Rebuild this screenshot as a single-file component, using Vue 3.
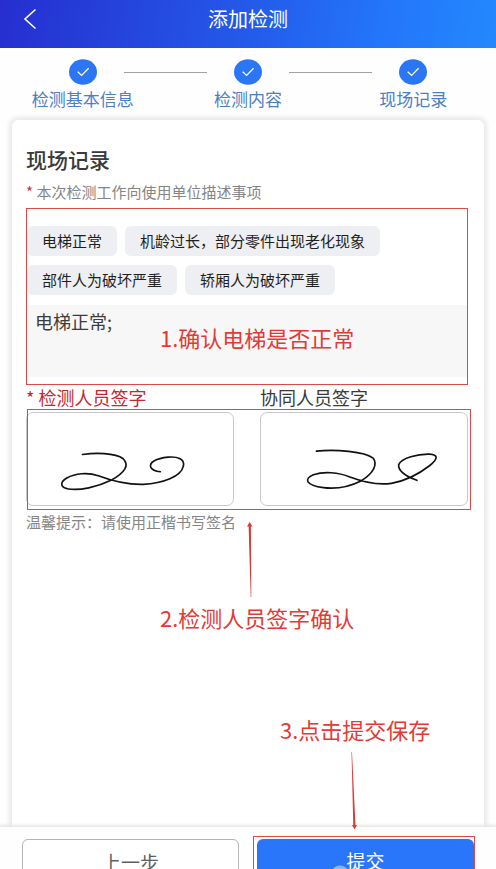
<script setup>
import { ref } from 'vue'

const steps = ['检测基本信息', '检测内容', '现场记录']
const tags = ['电梯正常', '机龄过长，部分零件出现老化现象', '部件人为破坏严重', '轿厢人为破坏严重']
const note = ref('电梯正常;')

function addTag(tag) {
  note.value += tag + ';'
}
</script>

<template>
  <div class="page">
    <header class="bar">
      <button class="back" type="button" aria-label="返回">
        <svg viewBox="0 0 14 22" width="14" height="22"><path d="M12.500 1.500 L2 11 L12.500 20.500" /></svg>
      </button>
      <h1>添加检测</h1>
    </header>

    <ol class="steps">
      <li v-for="step in steps" :key="step">
        <div class="marker">
          <span class="line"></span>
          <svg class="dot" viewBox="0 0 28 26" width="28" height="26">
            <ellipse cx="14" cy="13" rx="14" ry="12.700" />
            <path d="M8.700 12.800 L12.600 16.400 L19.600 9.200" />
          </svg>
          <span class="line"></span>
        </div>
        <span class="label">{{ step }}</span>
      </li>
    </ol>

    <main class="card">
      <h2>现场记录</h2>
      <label class="desc" for="note"><span class="star">*</span> 本次检测工作向使用单位描述事项</label>

      <section class="record">
        <div class="tags">
          <button v-for="tag in tags" :key="tag" type="button" @click="addTag(tag)">{{ tag }}</button>
        </div>
        <textarea id="note" v-model="note"></textarea>
        <p class="callout first">1.确认电梯是否正常</p>
      </section>

      <div class="sign-labels">
        <span class="required">* 检测人员签字</span>
        <span>协同人员签字</span>
      </div>
      <section class="signs">
        <div class="pad">
          <svg viewBox="80 84 621 278" role="img" aria-label="检测人员签字">
            <path d="M247 209 C285 204 345 203 370 222 C390 242 374 264 335 286 C290 308 240 318 205 313 C180 309 178 293 200 280 C225 266 262 262 295 273 C340 290 385 300 430 299 C490 296 545 275 551 245 C558 220 530 215 505 217 C470 221 448 232 453 247 C458 258 470 260 482 261" />
          </svg>
        </div>
        <div class="pad">
          <svg viewBox="37 84 621 278" role="img" aria-label="协同人员签字">
            <path d="M204 199 C260 193 350 200 375 220 C390 240 375 265 340 288 C300 308 265 314 225 309 C172 303 165 282 195 270 C225 260 270 262 305 277 C345 292 385 303 430 296 C465 290 510 270 545 243 C575 218 568 210 545 208 C510 207 460 220 452 240 C450 258 475 275 507 287" />
          </svg>
        </div>
      </section>
      <p class="hint">温馨提示：请使用正楷书写签名</p>
    </main>

    <footer class="actions">
      <button class="prev" type="button">上一步</button>
      <div class="submit-wrap">
        <button class="submit" type="button">提交</button>
        <svg class="mark" viewBox="0 0 18 16" width="18" height="16"><ellipse cx="9" cy="8" rx="8.500" ry="7.500" /></svg>
      </div>
    </footer>

    <svg class="arrow up" viewBox="0 0 8 76" width="8" height="76"><path d="M2.600 3 L4.900 3 L5.300 75 L4.700 75 Z M3.700 0 L6.500 4.500 L1 4.500 Z" /></svg>
    <p class="callout second">2.检测人员签字确认</p>
    <p class="callout third">3.点击提交保存</p>
    <svg class="arrow down" viewBox="0 0 8 78" width="8" height="78"><path d="M1.500 0 L2 0 L5.500 74 L3.300 74 Z M2 73 L7 73 L4.600 77.500 Z" /></svg>
  </div>
</template>

<style>
body {
  margin: 0;
  background: #fff;
}
</style>

<style scoped>
.page {
  position: relative;
  display: flex;
  flex-direction: column;
  height: 100vh;
  overflow: hidden;
  background: #fefefe;
  color: #3a3a3a;
  font-family: "Noto Sans CJK SC", sans-serif;
}

h1, h2, p, ol {
  margin: 0;
  padding: 0;
  font-weight: 400;
}

button, textarea {
  font-family: inherit;
  margin: 0;
  box-sizing: border-box;
}

.bar {
  display: grid;
  grid-template-columns: 60px 1fr 60px;
  align-items: center;
  height: 48px;
  padding-bottom: 10px;
  box-sizing: border-box;
  flex: none;
  color: #fff;
  background: linear-gradient(100deg, #262ecf 0%, #2458e8 48%, #2377fa 78%, #2388fe 100%);
}

.bar h1 {
  font-size: 20px;
  line-height: 28px;
  text-align: center;
}

.back {
  display: flex;
  padding: 0 0 0 23px;
  border: 0;
  background: none;
}

.back svg {
  fill: none;
  stroke: #fff;
  stroke-width: 1.6;
}

.steps {
  display: grid;
  grid-template-columns: repeat(3, 1fr);
  flex: none;
  padding: 11px 0 10px;
  list-style: none;
}

.steps li {
  text-align: center;
}

.marker {
  display: flex;
  align-items: center;
  gap: 27px;
}

.line {
  flex: 1;
  height: 1px;
  background: #a2a2a2;
}

.steps li:first-child .line:first-child,
.steps li:last-child .line:last-child {
  visibility: hidden;
}

.dot {
  fill: #2a76f5;
}

.dot path {
  fill: none;
  stroke: #fff;
  stroke-width: 1.3;
}

.label {
  display: block;
  margin-top: 2px;
  font-size: 17px;
  line-height: 23px;
  color: #4a80c6;
  white-space: nowrap;
}

.card {
  flex: 1;
  margin: 0 12px;
  padding: 25px 16px 0 14px;
  border-radius: 6px 6px 0 0;
  background: #fff;
  box-shadow: 0 0 4px 3px #e9e9e9;
}

.card h2 {
  font-size: 21px;
  line-height: 28px;
  font-weight: 500;
}

.desc {
  display: block;
  margin-top: 7px;
  font-size: 15px;
  line-height: 24px;
  color: #858585;
}

.star {
  color: #c8353a;
}

.record {
  position: relative;
  margin-top: 4px;
  padding: 17px 0 7px;
  border: 1px solid #dc4a48;
}

.tags {
  display: flex;
  flex-wrap: wrap;
  gap: 9px 8px;
}

.tags button {
  height: 30px;
  padding: 0 15px;
  border: 0;
  border-radius: 6px;
  background: #eeeff3;
  color: #1f1f22;
  font-size: 15px;
  line-height: 28px;
}

textarea {
  display: block;
  width: 100%;
  height: 72px;
  margin-top: 10px;
  padding: 3px 8px;
  border: 0;
  resize: none;
  background: #f7f7f7;
  color: #3c3c3c;
  font-size: 18px;
  line-height: 26px;
}

.callout {
  position: absolute;
  font-size: 22px;
  line-height: 30px;
  color: #e23a36;
  white-space: nowrap;
}

.first {
  left: 133px;
  top: 113px;
}

.second {
  left: 160px;
  top: 602px;
}

.third {
  left: 280px;
  top: 714px;
}

.sign-labels {
  display: grid;
  grid-template-columns: 1fr 1fr;
  column-gap: 26px;
  font-size: 18px;
  line-height: 24px;
}

.required {
  color: #c22a30;
}

.signs {
  position: relative;
  display: grid;
  grid-template-columns: 1fr 1fr;
  column-gap: 26px;
  padding: 3px 0 4px;
}

.signs::after {
  content: "";
  position: absolute;
  inset: 0 -3px 0 1px;
  border: 1px solid #dc4a48;
  pointer-events: none;
}

.pad {
  border: 1px solid #c9c9cb;
  border-radius: 7px;
}

.pad svg {
  display: block;
  width: 100%;
  fill: none;
  stroke: #111;
  stroke-width: 5;
  stroke-linecap: round;
}

.hint {
  font-size: 15px;
  line-height: 24px;
  color: #858585;
}

.actions {
  position: relative;
  display: grid;
  grid-template-columns: 1fr 1fr;
  column-gap: 18px;
  flex: none;
  height: 42px;
  padding: 12px 22px 0;
  box-sizing: border-box;
  background: #fefefe;
  box-shadow: 0 -1px 3px 1px #e6e6e6;
}

.actions button {
  width: 100%;
  height: 46px;
  border-radius: 6px;
  font-size: 19px;
  line-height: 28px;
}

.prev {
  border: 1px solid #b4b4b4;
  background: #fff;
  color: #606060;
}

.submit-wrap {
  position: relative;
}

.submit-wrap::after {
  content: "";
  position: absolute;
  inset: -3px -1px -20px -4px;
  border: 1px solid #dc4a48;
  pointer-events: none;
}

.actions .submit {
  height: 44px;
  border: 0;
  background: #2976fa;
  color: #fff;
}

.mark {
  position: absolute;
  left: 74px;
  top: 26px;
  fill: #fff;
  opacity: 0.45;
}

.arrow {
  position: absolute;
  fill: #d93a38;
}

.up {
  left: 246px;
  top: 522px;
}

.down {
  left: 350px;
  top: 752px;
}
</style>
